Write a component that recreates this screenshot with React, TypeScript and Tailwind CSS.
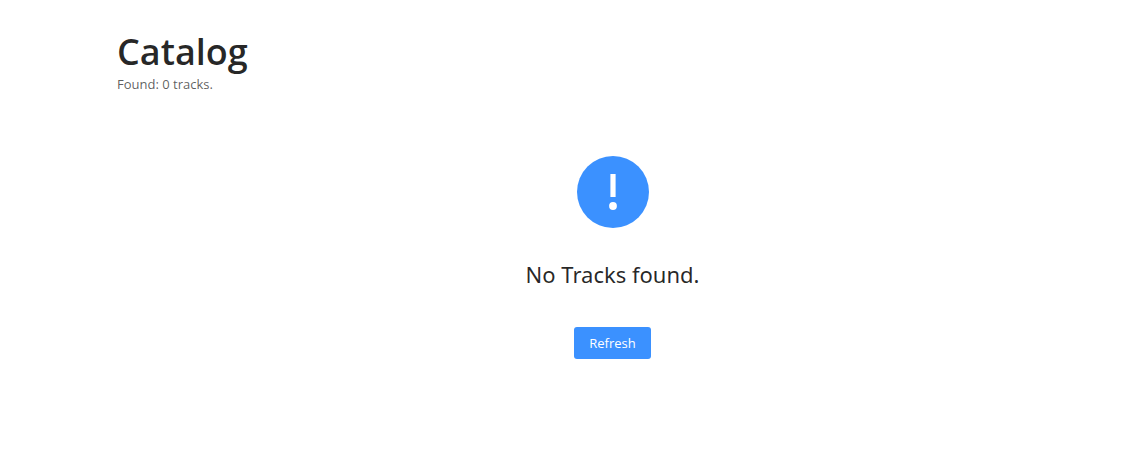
export default function App() {
  return (
    <main className="min-h-screen bg-white pt-7 pl-[117px] pr-8 font-['Open_Sans','Noto_Sans',sans-serif] text-sm text-black/85">
      <header>
        <h1 className="text-[36px] leading-[47px] font-semibold">Catalog</h1>
        <p className="text-[13px] leading-[18px] text-black/65">Found: 0 tracks.</p>
      </header>
      <section className="flex flex-col items-center pt-[63px] pb-12">
        <svg className="size-[72px]" viewBox="0 0 72 72" aria-hidden="true">
          <circle cx="36" cy="36" r="36" fill="#3b91ff" />
          <path d="M33.400 18h5.200v23h-5.200z" fill="#fff" />
          <circle cx="36" cy="50" r="3.900" fill="#fff" />
        </svg>
        <h2 className="mt-6 font-['Noto_Sans','Open_Sans',sans-serif] text-[22px] leading-[44px]">No Tracks found.</h2>
        <button type="button" className="mt-[31px] h-8 rounded-[3px] bg-[#3b91ff] px-[15px] text-[13px] text-white">
          Refresh
        </button>
      </section>
    </main>
  );
}
